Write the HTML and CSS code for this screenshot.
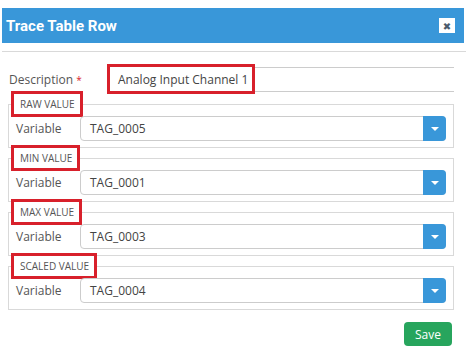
FILE: index.html
```html
<!DOCTYPE html>
<html lang="en">
<head>
    <meta charset="UTF-8">
    <title>Trace Table Row</title>
    <link rel="stylesheet" href="styles.css">
</head>
<body>
    <div class="modal">
        <!-- header -->
        <div class="modal-header">
            <span class="modal-title">Trace Table Row</span>
            <span class="close-btn">&#x2716;</span>
        </div>
        <div class="divider"></div>

        <div class="modal-body">
            <div class="desc-row">
                <label class="desc-label">Description <span class="req">*</span></label>
                <div class="desc-input">
                    <span class="mark">Analog Input Channel 1</span>
                </div>
            </div>

            <fieldset class="group">
                <legend class="mark">RAW VALUE</legend>
                <div class="var-row">
                    <span class="var-label">Variable</span>
                    <div class="select">
                        <span class="select-value">TAG_0005</span>
                        <span class="select-btn"></span>
                    </div>
                </div>
            </fieldset>

            <fieldset class="group">
                <legend class="mark">MIN VALUE</legend>
                <div class="var-row">
                    <span class="var-label">Variable</span>
                    <div class="select">
                        <span class="select-value">TAG_0001</span>
                        <span class="select-btn"></span>
                    </div>
                </div>
            </fieldset>

            <fieldset class="group">
                <legend class="mark">MAX VALUE</legend>
                <div class="var-row">
                    <span class="var-label">Variable</span>
                    <div class="select">
                        <span class="select-value">TAG_0003</span>
                        <span class="select-btn"></span>
                    </div>
                </div>
            </fieldset>

            <fieldset class="group">
                <legend class="mark">SCALED VALUE</legend>
                <div class="var-row">
                    <span class="var-label">Variable</span>
                    <div class="select">
                        <span class="select-value">TAG_0004</span>
                        <span class="select-btn"></span>
                    </div>
                </div>
            </fieldset>

            <div class="footer">
                <button class="save-btn">Save</button>
            </div>
        </div>
    </div>
</body>
</html>
```

FILE: styles.css
```css
:root {
    --blue: #3997d9;
    --red: #d8202b;
    --green: #27a55d;
    --line: #d9d9d9;
}

* {
    box-sizing: border-box;
    margin: 0;
    padding: 0;
}

body {
    font-family: "Open Sans", "DejaVu Sans", sans-serif;
    font-size: 12px;
    color: #555;
    background: white;
}

.modal {
    padding-top: 8px;
}

/* header */
.modal-header {
    margin: 0 4px 0 2px;
    height: 35px;
    background: var(--blue);
    display: flex;
    align-items: center;
    justify-content: space-between;
    padding: 0 9px 0 4px;
}

.modal-title {
    font-family: Roboto, "Liberation Sans", sans-serif;
    font-weight: bold;
    font-size: 15px;
    color: white;
}

.close-btn {
    width: 16px;
    height: 15px;
    background: white;
    color: #4a5b6c;
    font-size: 10px;
    font-weight: bold;
    display: flex;
    align-items: center;
    justify-content: center;
}

.divider {
    margin: 8px 2px 0 2px;
    border-top: 1px solid var(--line);
}

.modal-body {
    padding: 0 14px 0 8px;
}

/* description */
.desc-row {
    display: flex;
    align-items: center;
    margin-top: 15px;
}

.desc-label {
    width: 99px;
    padding-left: 1px;
}

.req {
    color: var(--red);
    font-size: 10px;
}

.desc-input {
    flex: 1;
    height: 25px;
    border: 1px solid #ccc;
    border-right: none;
    border-radius: 4px 0 0 4px;
    display: flex;
}

.desc-input .mark {
    margin: -4px 0 -3px -1px;
    padding: 0 4px 0 8px;
    display: flex;
    align-items: center;
    color: #444;
}

/* red annotation boxes */
.mark {
    border: 3px solid var(--red);
    background: white;
}

/* groups */
.group {
    border: 1px solid var(--line);
    padding: 0 7px 6px 7px;
    margin-top: -3px;
}

.group:first-of-type {
    margin-top: -1px;
}

.group legend {
    margin-left: -5px;
    padding: 0 5px 0 6px;
    height: 26px;
    display: flex;
    align-items: center;
    font-size: 10px;
    color: #555;
}

.var-row {
    display: flex;
    align-items: center;
    margin-top: -1px;
}

.var-label {
    width: 64px;
}

.select {
    flex: 1;
    height: 25px;
    border: 1px solid #ccc;
    border-radius: 4px;
    display: flex;
    align-items: center;
    justify-content: space-between;
    padding-left: 9px;
    color: #444;
}

.select-btn {
    width: 23px;
    height: 25px;
    margin: -1px -1px -1px 0;
    background: var(--blue);
    border-radius: 0 4px 4px 0;
    display: flex;
    align-items: center;
    justify-content: center;
}

.select-btn::after {
    content: "";
    border-left: 4px solid transparent;
    border-right: 4px solid transparent;
    border-top: 4px solid white;
}

/* footer */
.footer {
    display: flex;
    justify-content: flex-end;
    margin-top: 12px;
    padding-right: 2px;
}

.save-btn {
    background: var(--green);
    color: white;
    border: none;
    border-radius: 4px;
    width: 48px;
    height: 24px;
    font-family: "Open Sans", "DejaVu Sans", sans-serif;
    font-size: 12px;
}
```
